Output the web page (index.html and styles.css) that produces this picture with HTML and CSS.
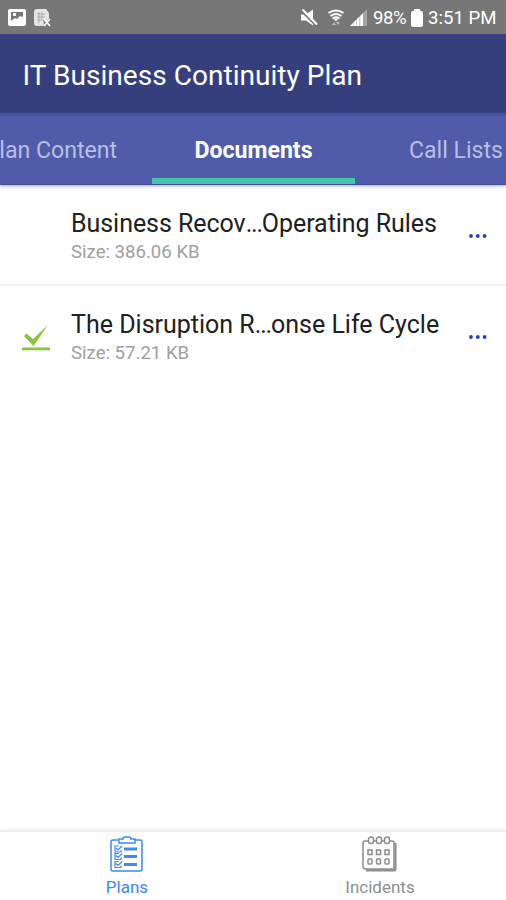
FILE: index.html
```html
<!DOCTYPE html>
<html lang="en">
<head>
<meta charset="utf-8">
<title>IT Business Continuity Plan</title>
<link rel="stylesheet" href="styles.css">
</head>
<body>
<div class="app">
  <div class="status">
    <svg class="notices" width="44" height="20" viewBox="0 0 44 20">
      <path fill="#fff" fill-rule="evenodd" d="M2 1h14q2 0 2 2v13q0 2-2 2H2q-2 0-2-2V3q0-2 2-2zM3 4v9l4-3 2 1 3-3 3 1V4zM5 5h3v3H5z"/>
      <path fill="#e4e4e4" d="M29 1h9l3 4v6l-3 3-3-2 1 4-1 2h-6q-3 0-3-3V4q0-3 3-3z"/>
      <path d="M29 6h8M29 9h8M29 12h5M31 4v11M34 4v8" stroke="#999" stroke-width=".7"/>
      <path d="M36 11l6 7M42 11l-6 7" stroke="#fff" stroke-width="1.7"/>
    </svg>
    <svg class="signals" width="68" height="20" viewBox="0 0 68 20">
      <path fill="#fff" d="M0 6.500h5l7-5v16l-7-5H0z"/>
      <path d="M0 2.500l15 15" stroke="#777" stroke-width="2"/>
      <path d="M1.500 1.500l14.500 15" stroke="#fff" stroke-width="2"/>
      <path d="M27.500 5q7.500-5 15 0M29.500 8q5.500-4 11 0M31.500 10.500q3.500-2.500 7 0" fill="none" stroke="#fff" stroke-width="1.8"/>
      <path fill="#fff" d="M32.500 10.500h5l-2.500 3z"/>
      <path fill="#bbb" d="M31 17l2-3 2 3zM35 14h4l-2 3z"/>
      <path fill="#a5a5a5" d="M49 18L66 1v17z"/>
      <path fill="#fff" d="M49 18l3-3v3zM52.500 18v-3.500l3-3V18zM56 18v-7l2.500-2.500V18zM59.200 18V8l2.800-2.800V18z"/>
    </svg>
    <span class="percent">98%</span>
    <svg class="battery" width="12" height="18" viewBox="0 0 12 18"><path fill="#fff" d="M3 0h6v2h1q2 0 2 2v12q0 2-2 2H2q-2 0-2-2V4q0-2 2-2h1z"/></svg>
    <span class="clock">3:51 PM</span>
  </div>
  <header class="bar"><h1>IT Business Continuity Plan</h1></header>
  <nav class="tabs">
    <div class="tab first"><span>Plan Content</span></div>
    <div class="tab active"><span>Documents</span></div>
    <div class="tab last"><span>Call Lists</span></div>
  </nav>
  <main>
    <div class="row">
      <div class="mark"></div>
      <div class="info"><div class="name long">Business Recov<span class="dots">...</span>Operating Rules</div><div class="size">Size: 386.06 KB</div></div>
      <svg class="more" width="18" height="4" viewBox="0 0 18 4"><g fill="#263fc0"><circle cx="2" cy="2" r="1.9"/><circle cx="8.800" cy="2" r="1.9"/><circle cx="15.600" cy="2" r="1.9"/></g></svg>
    </div>
    <div class="row">
      <div class="mark"><svg width="28" height="26" viewBox="0 0 28 26"><path fill="#87c540" d="M2 11l2.500-2.500L11 14 26 0 11.500 21z"/><path fill="#87c540" d="M0 22.500h28v2.800H0z"/></svg></div>
      <div class="info"><div class="name">The Disruption R<span class="dots">...</span>onse Life Cycle</div><div class="size">Size: 57.21 KB</div></div>
      <svg class="more" width="18" height="4" viewBox="0 0 18 4"><g fill="#263fc0"><circle cx="2" cy="2" r="1.9"/><circle cx="8.800" cy="2" r="1.9"/><circle cx="15.600" cy="2" r="1.9"/></g></svg>
    </div>
  </main>
  <nav class="bottom">
    <div class="item on">
      <svg width="34" height="38" viewBox="0 0 34 38" fill="none" stroke="#3f8bea" stroke-width="1.5">
        <path d="M8 4H3Q1 4 1 6v27q0 2 2 2h27q2 0 2-2V6q0-2-2-2h-5"/>
        <path d="M9 3h4q0-2 2-2h4q2 0 2 2h4v4H9z"/>
        <path d="M14 13h13M14 20.500h13M14 28.500h13" stroke-width="3"/>
        <path d="M9 10H5v6h6v-2M9 17.500H5v6h6v-2M9 25.500H5v6h6v-2M6 12l2 2 4-4M6 19.500l2 2 4-4M6 27.500l2 2 4-4" stroke-width="1.2"/>
      </svg>
      <span>Plans</span>
    </div>
    <div class="item">
      <svg width="36" height="38" viewBox="0 0 36 38" fill="none" stroke="#8b8b8b" stroke-width="1.5">
        <path d="M6 5H3Q1 5 1 7v23q0 3 3 3h28V7q0-2-2-2h-2M12 5h2M20 5h2"/>
        <path d="M33.500 7v26q0 1.500-2 1.500H4" stroke-width="2"/>
        <g><rect x="6.500" y="1" width="5" height="6.500" rx="2.300"/><rect x="14.500" y="1" width="5" height="6.500" rx="2.300"/><rect x="22.500" y="1" width="5" height="6.500" rx="2.300"/></g>
        <g><rect x="6" y="14" width="4" height="4.500"/><rect x="14.500" y="14" width="4" height="4.500"/><rect x="23" y="14" width="4" height="4.500"/><rect x="6" y="23" width="4" height="5" rx="1"/><rect x="14.500" y="23" width="4" height="5" rx="1"/><rect x="23" y="23" width="4" height="5" rx="1"/></g>
      </svg>
      <span>Incidents</span>
    </div>
  </nav>
</div>
</body>
</html>
```
FILE: styles.css
```css
* { box-sizing: border-box; }
body { margin: 0; background: #fff; font-family: Roboto, "Liberation Sans", sans-serif; }
svg { display: block; flex: none; }
.app { width: 506px; height: 900px; display: flex; flex-direction: column; overflow: hidden; white-space: nowrap; }
.status { height: 34px; flex: none; background: #777; color: #fff; display: flex; align-items: center; padding: 2px 0 0 8px; font-size: 18.600px; line-height: 34px; }
.signals { margin-left: 249px; }
.percent { margin-left: 4px; width: 34px; letter-spacing: -.4px; }
.battery { margin-left: 4px; }
.clock { margin-left: 5px; }
.bar { height: 79px; flex: none; background: #353f7d; padding-left: 22.500px; display: flex; align-items: center; border-top: 1px solid #38448c; }
h1 { margin: 4px 0 0; color: #fff; font-size: 28.100px; font-weight: 400; line-height: 36px; }
.tabs { height: 72px; flex: none; display: grid; grid-template-columns: 152px 203px 151px; color: #b8bee5; font-size: 23.100px; line-height: 75px; background: linear-gradient(#444e96, #505ba9 4px); border-bottom: 1px solid #454e95; box-shadow: 0 2px 2px #c4c6d8; }
.tab { overflow: hidden; display: flex; justify-content: flex-end; height: 71px; }
.first { padding-right: 35px; }
.active { justify-content: center; color: #fff; font-weight: 700; border-bottom: 6px solid #47c2ac; }
.last { padding-right: 3px; }
main { flex: 1; }
.row { height: 99px; display: flex; }
.row + .row { border-top: 2px solid #eceef0; height: 102px; }
.mark { width: 71px; padding: 39px 0 0 22px; flex: none; }
.info { width: 397px; padding-top: 22px; }
.name { color: #202020; font-size: 25px; line-height: 34px; }
.long { letter-spacing: -.05px; }
.dots { letter-spacing: -1.200px; }
.size { color: #a0a0a0; font-size: 18.600px; line-height: 22px; }
.more { margin: 49px 0 0 1px; }
.bottom { height: 70px; flex: none; border-top: 2px solid #ededee; box-shadow: 0 -1px 2px #f2f2f2; display: grid; grid-template-columns: 1fr 1fr; }
.item { display: flex; flex-direction: column; align-items: center; padding-top: 4px; color: #8e8e8e; font-size: 17px; line-height: 24px; }
.item span { margin: 1px 0 0 1px; }
.on { color: #3f86ec; }
```
